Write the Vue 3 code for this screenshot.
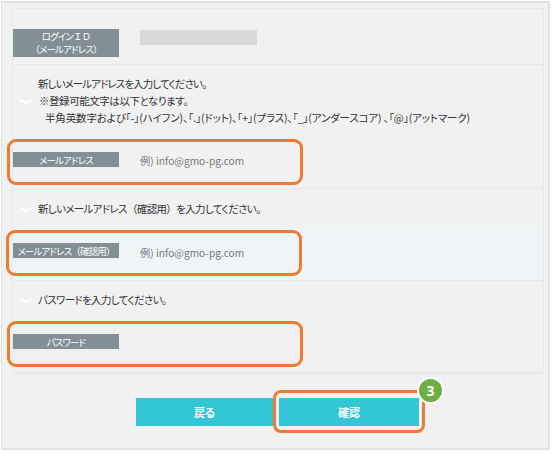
<template>
  <div class="page">
    <div class="panel">
      <div class="form-box">
        <div class="row row-id">
          <div class="label label-tall"><span>ログイン<span class="wide">ＩＤ</span></span><br><span><span class="wide">（</span>メールアドレス<span class="wide">）</span></span></div>
          <div class="id-value"></div>
        </div>

        <div class="guide guide-first">
          <svg class="chevron" viewBox="0 0 12 6"><path d="M1 1 6 4.2 11 1" /></svg>
          <div class="guide-text">
            <p class="line-new">新しいメールアドレスを入力してください。</p>
            <p class="line-note">※登録可能文字は以下となります。</p>
            <p class="line-chars">半角英数字および「-」(ハイフン)、「.」(ドット)、「+」(プラス)、「_」(アンダースコア) 、「@」(アットマーク)</p>
          </div>
        </div>
        <div class="row row-input">
          <div class="mark mark-a"></div>
          <div class="label">メールアドレス</div>
          <div class="placeholder">例) info@gmo-pg.com</div>
        </div>

        <div class="guide guide-mail">
          <svg class="chevron" viewBox="0 0 12 6"><path d="M1 1 6 4.2 11 1" /></svg>
          <div class="guide-text"><p>新しいメールアドレス<span class="wide">（</span>確認用<span class="wide">）</span>を入力してください。</p></div>
        </div>
        <div class="row row-input row-focus">
          <div class="mark mark-b"></div>
          <div class="label">メールアドレス<span class="wide">（</span>確認用<span class="wide">）</span></div>
          <div class="placeholder">例) info@gmo-pg.com</div>
        </div>

        <div class="guide guide-pass">
          <svg class="chevron" viewBox="0 0 12 6"><path d="M1 1 6 4.2 11 1" /></svg>
          <div class="guide-text"><p>パスワードを入力してください。</p></div>
        </div>
        <div class="row row-input row-last">
          <div class="mark mark-c"></div>
          <div class="label">パスワード</div>
        </div>
      </div>

      <div class="actions">
        <button class="btn">戻る</button>
        <div class="confirm-wrap">
          <button class="btn btn-confirm">確認</button>
          <span class="badge">3</span>
        </div>
      </div>
    </div>
  </div>
</template>

<script setup>
</script>

<style>
html, body { margin: 0; background: #fff; }
</style>

<style scoped>
.page {
  width: 552px;
  height: 455px;
  padding: 1px 0 0 1px;
  box-sizing: border-box;
  overflow: hidden;
  font-family: "Noto Sans CJK JP", "Noto Sans", sans-serif;
  font-feature-settings: "palt";
  color: #333;
}

.panel {
  box-sizing: border-box;
  width: 549px;
  height: 449px;
  padding: 5px 4px 0 10px;
  background: #f1f1f1;
  border: 1px solid #e2e2e2;
  border-width: 2px 2px 2px 1px;
}

.form-box {
  border: 1px solid #e8e8e8;
  border-bottom-width: 2px;
  height: 366px;
  box-sizing: border-box;
}

.wide { font-feature-settings: normal; }

.row {
  position: relative;
  display: flex;
  align-items: center;
  border-bottom: 1px solid #e6e6e6;
}

.row-id {
  height: 56px;
  padding-top: 13px;
  box-sizing: border-box;
}

.row-input { height: 54px; padding-bottom: 4px; box-sizing: border-box; }
.row-focus { height: 53px; background: #eff4f7; padding-bottom: 6px; }
.row-last { height: 54px; border-bottom: 0; padding-bottom: 6px; }

.label {
  flex: none;
  box-sizing: border-box;
  width: 106px;
  height: 16px;
  background: #828f95;
  color: #fff;
  font-size: 9.5px;
  letter-spacing: -0.85px;
  line-height: 16px;
  text-align: center;
  white-space: nowrap;
  border-bottom: 1px solid #eceef0;
}

.label-tall {
  height: 29px;
  line-height: 13px;
  padding-top: 1px;
}

.id-value {
  width: 117px;
  height: 15px;
  margin-left: 21px;
  margin-top: -11px;
  background: #d9d9d9;
}

.placeholder {
  margin-left: 21px;
  font-size: 10.2px;
  color: #777;
  white-space: nowrap;
  padding-top: 2px;
}

.guide {
  display: flex;
  align-items: center;
  box-sizing: border-box;
}

.guide-first { height: 70px; padding-top: 1px; }
.guide-mail { height: 39px; }
.guide-pass { height: 37px; }

.chevron {
  flex: none;
  width: 12px;
  height: 6px;
  margin: 2px 6px 0 7px;
  fill: none;
  stroke: #fff;
  stroke-width: 2;
}

.guide-text {
  font-size: 10.5px;
  line-height: 17px;
  white-space: nowrap;
  letter-spacing: -0.65px;
  color: #333;
}

.guide-text p { margin: 0; }
.line-new { letter-spacing: -0.9px; }
.line-note { letter-spacing: -0.45px; padding-left: 1px; }
.line-chars { letter-spacing: -0.15px; padding-left: 7px; }

.mark {
  position: absolute;
  box-sizing: border-box;
  width: 296px;
  height: 46px;
  border: 3px solid #ee7b2f;
  border-radius: 9px;
  pointer-events: none;
}

.mark-a { left: -6px; top: 4px; }
.mark-b { left: -7px; top: 2px; }
.mark-c { left: -6px; top: 3px; }

.actions {
  display: flex;
  align-items: flex-start;
  gap: 6px;
  padding: 24px 0 0 124px;
}

.btn {
  width: 137px;
  height: 28px;
  padding: 0;
  border: 0;
  background: #33c6d5;
  color: #fff;
  font-family: inherit;
  font-feature-settings: inherit;
  font-size: 11px;
  font-weight: 700;
}

.btn-confirm { width: 140px; display: block; }

.confirm-wrap {
  position: relative;
}

.confirm-wrap::before {
  content: "";
  position: absolute;
  left: -6px;
  top: -8px;
  right: -6px;
  bottom: -7px;
  border: 3px solid #ee7b2f;
  border-radius: 8px;
}

.badge {
  position: absolute;
  right: -25px;
  top: -21px;
  box-sizing: border-box;
  width: 27px;
  height: 27px;
  border: 2px solid #fff;
  border-radius: 50%;
  background: #70ad47;
  color: #fff;
  font-family: "Open Sans", sans-serif;
  font-size: 14px;
  font-weight: 700;
  line-height: 23px;
  text-align: center;
}
</style>
